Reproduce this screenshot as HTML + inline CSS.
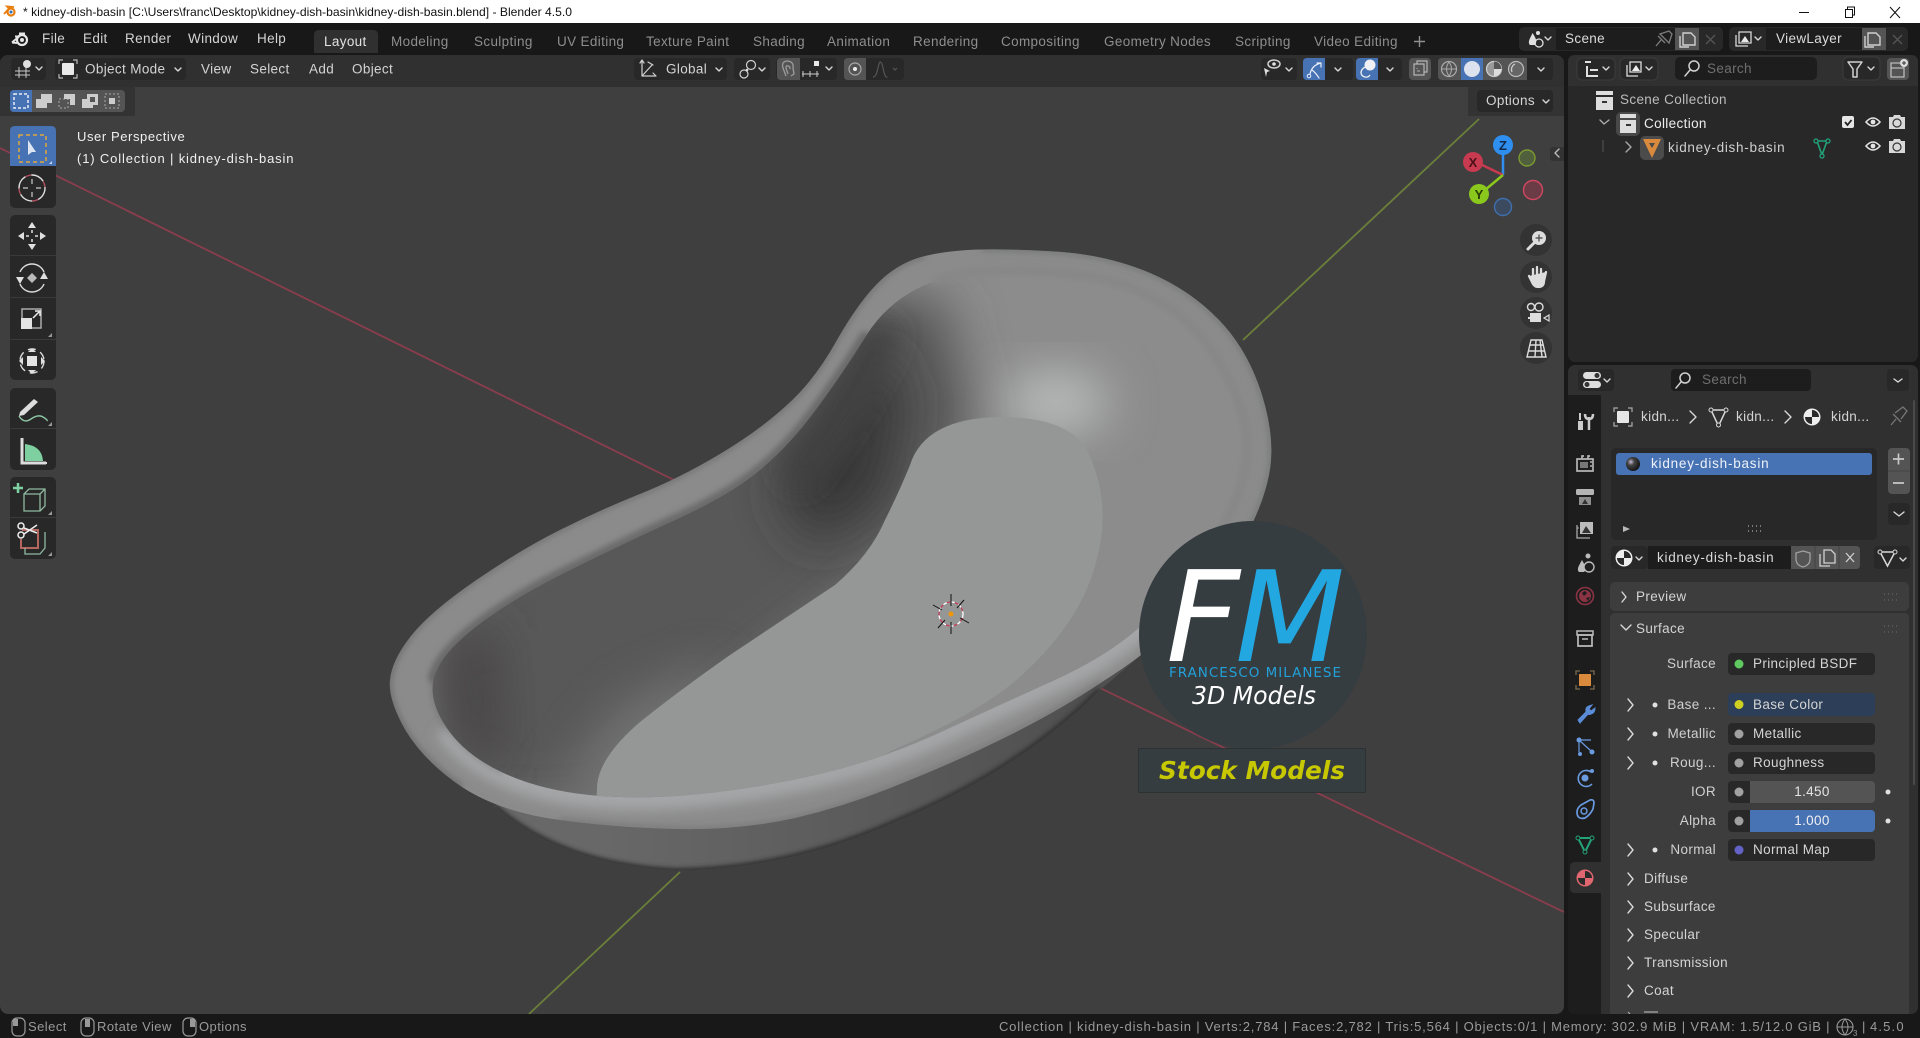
<!DOCTYPE html>
<html><head><meta charset="utf-8"><title>Blender</title>
<style>
html,body{margin:0;padding:0;background:#181818;width:1920px;height:1038px;overflow:hidden}
svg{display:block}
text{font-family:"Liberation Sans",sans-serif;font-size:13.5px;letter-spacing:.35px;fill:#d4d4d4;white-space:pre}
.tab{fill:#8e8e8e}.dim{fill:#6f6f6f}.lab{text-anchor:end;fill:#d0d0d0}.sb{fill:#9a9a9a;font-size:13px;letter-spacing:.45px}
.ic{fill:none;stroke:#d0d0d0;stroke-width:1.5;stroke-linecap:round;stroke-linejoin:round}
.chev{fill:none;stroke:#d8d8d8;stroke-width:1.4;stroke-linecap:round;stroke-linejoin:round}
.logo{font-family:"DejaVu Sans",sans-serif;font-style:oblique;letter-spacing:0}
</style></head><body>
<svg xmlns="http://www.w3.org/2000/svg" width="1920" height="1038" viewBox="0 0 1920 1038">
<defs>
<clipPath id="inner"><path d="M995 271Q1040 270 1080 275Q1120 280 1155 299Q1190 318 1212.500 351.500Q1235 385 1243.500 417.500Q1252 450 1241 485Q1230 520 1205 555Q1180 590 1145 622.500Q1110 655 1055 680Q1000 705 940 732.500Q880 760 820 774Q760 788 700 794Q640 800 590 795Q540 790 502.500 772.500Q465 755 446.500 727.500Q428 700 434 677.500Q440 655 475 627.500Q510 600 565 572.500Q620 545 675 520Q730 495 760 470Q790 445 817.500 407.500Q845 370 865 337.500Q885 305 917.500 288.500Q950 272 995 271Z"/></clipPath>
<clipPath id="outer"><path d="M982 249.500Q1015 249 1062 252Q1110 256 1150 273Q1190 290 1219 320Q1248 350 1262 395Q1276 440 1269 475Q1262 510 1238 550Q1215 590 1180 622Q1145 655 1102 682Q1060 710 1010 735Q960 760 905 782Q850 805 795 818Q740 830 680 829Q620 828 560 820Q500 812 462 787Q425 762 406 731Q388 700 390 680Q392 660 411 636Q430 612 475 581Q520 550 560 530Q600 510 640 494Q680 478 720 454Q760 430 787 405Q815 380 837 340Q860 300 880 281Q900 262 925 256Q950 250 982 249.500Z"/></clipPath>
<clipPath id="bodyc"><path d="M494 806Q560 865 675 871Q790 870 900 820Q1020 770 1100 690L1180 622L900 700Z"/></clipPath>
<clipPath id="vp"><rect x="0" y="55" width="1564" height="959" rx="8"/></clipPath>
<filter id="b2" x="-20%" y="-20%" width="140%" height="140%"><feGaussianBlur stdDeviation="2"/></filter>
<filter id="b3" x="-20%" y="-20%" width="140%" height="140%"><feGaussianBlur stdDeviation="3"/></filter>
<filter id="b6" x="-30%" y="-30%" width="160%" height="160%"><feGaussianBlur stdDeviation="6"/></filter>
<filter id="b14" x="-40%" y="-40%" width="180%" height="180%"><feGaussianBlur stdDeviation="14"/></filter>
<filter id="b24" x="-50%" y="-50%" width="200%" height="200%"><feGaussianBlur stdDeviation="24"/></filter>
<linearGradient id="body" gradientUnits="userSpaceOnUse" x1="600" y1="0" x2="1080" y2="0"><stop offset="0" stop-color="#686868"/><stop offset="1" stop-color="#505050"/></linearGradient>
<radialGradient id="mat" cx=".35" cy=".35" r=".7"><stop offset="0" stop-color="#c8b8d8"/><stop offset=".35" stop-color="#444"/><stop offset="1" stop-color="#111"/></radialGradient>
</defs>

<!-- backgrounds -->
<rect width="1920" height="1038" fill="#181818"/>
<rect width="1920" height="23" fill="#fff"/>

<!-- title bar -->
<g transform="translate(11,12)"><circle r="3.500" fill="none" stroke="#e87d0d" stroke-width="2.200"/><circle r="1.500" fill="#2a70b8"/><path d="M-7 2L-2 -3.500L-4 -5.500L3 -5" fill="none" stroke="#e87d0d" stroke-width="1.800"/></g>
<text x="23" y="16" textLength="549" lengthAdjust="spacingAndGlyphs" style="font-size:12px;letter-spacing:0;fill:#111">* kidney-dish-basin [C:\Users\franc\Desktop\kidney-dish-basin\kidney-dish-basin.blend] - Blender 4.5.0</text>
<path d="M1799 12.500h10" stroke="#111" stroke-width="1"/>
<path d="M1845.500 9.500h7v8h-7zM1847.500 9.500v-2.500h7v8h-2" fill="none" stroke="#111" stroke-width="1"/>
<path d="M1890 7l10 11M1900 7l-10 11" stroke="#111" stroke-width="1"/>

<!-- top bar -->
<g transform="translate(20,39)"><circle cx="2" cy="1" r="5" fill="none" stroke="#e6e6e6" stroke-width="2.200"/><circle cx="2" cy="1" r="2" fill="#e6e6e6"/><path d="M-8 3.500L-1 -2.500L-5 -2.500M-1 -5.500L5 -5.500M-8 3.500L-3 4" fill="none" stroke="#e6e6e6" stroke-width="2"/></g>
<g><text x="42" y="43">File</text><text x="83" y="43">Edit</text><text x="125" y="43">Render</text><text x="188" y="43">Window</text><text x="257" y="43">Help</text></g>
<path d="M314 53V35q0-5 5-5h54q5 0 5 5v18z" fill="#303030"/>
<text x="324" y="46" style="fill:#e2e2e2">Layout</text>
<g class="tabs">
<text class="tab" x="391" y="46">Modeling</text><text class="tab" x="474" y="46">Sculpting</text><text class="tab" x="557" y="46">UV Editing</text><text class="tab" x="646" y="46">Texture Paint</text><text class="tab" x="753" y="46">Shading</text><text class="tab" x="827" y="46">Animation</text><text class="tab" x="913" y="46">Rendering</text><text class="tab" x="1001" y="46">Compositing</text><text class="tab" x="1104" y="46">Geometry Nodes</text><text class="tab" x="1235" y="46">Scripting</text><text class="tab" x="1314" y="46">Video Editing</text></g>
<path d="M1414 41.500h11M1419.500 36v11" stroke="#8e8e8e" stroke-width="1.400"/>

<!-- scene selector -->
<rect x="1519" y="27" width="204" height="24" rx="5" fill="#282828"/>
<rect x="1556" y="28" width="126" height="22" fill="#1d1d1d"/>
<rect x="1675" y="28" width="24" height="22" fill="#545454"/>
<g transform="translate(1536,39)"><path d="M-6 6C-9 3 -5 -2 -3.500 -6C-1 -2 2 2 -1 6z" fill="#e0e0e0"/><circle cx="2" cy="-6" r="2" fill="#e0e0e0"/><circle cx="3" cy="4" r="4" fill="none" stroke="#e0e0e0" stroke-width="1.300"/></g>
<path class="chev" d="M1545 37l3 3l3-3"/>
<text x="1565" y="43" style="fill:#dcdcdc">Scene</text>
<path d="M1656 46l5-6M1658 36l7 7M1660 34l9-3l3 3l-3 9z" fill="none" stroke="#7c7c7c" stroke-width="1.300"/>
<path d="M1683 33h8l4 4v8h-12zM1680 36v11h9" fill="none" stroke="#d0d0d0" stroke-width="1.400"/>
<path d="M1706 35l9 9M1715 35l-9 9" stroke="#555" stroke-width="1.300"/>
<rect x="1729" y="27" width="179" height="24" rx="5" fill="#282828"/>
<rect x="1766" y="28" width="102" height="22" fill="#1d1d1d"/>
<rect x="1862" y="28" width="24" height="22" fill="#545454"/>
<path d="M1739 32h12v11h-12zM1736 35v11h12" fill="none" stroke="#d8d8d8" stroke-width="1.300"/><path d="M1741 42l4-6l4 6z" fill="#e8e8e8"/>
<path class="chev" d="M1755 37l3 3l3-3"/>
<text x="1776" y="43" style="fill:#dcdcdc">ViewLayer</text>
<path d="M1868 33h8l4 4v8h-12zM1865 36v11h9" fill="none" stroke="#d0d0d0" stroke-width="1.400"/>
<path d="M1893 35l9 9M1902 35l-9 9" stroke="#555" stroke-width="1.300"/>

<!-- VIEWPORT -->
<rect x="0" y="55" width="1564" height="959" rx="8" fill="#3f3f3f"/>
<g clip-path="url(#vp)">
<path d="M0 148L676 481M1100 688L1564 912" stroke="#8a3d4d" stroke-width="1.800" fill="none"/>
<path d="M1243 340L1479 119M680 872L529 1014" stroke="#6b7f3a" stroke-width="1.800" fill="none"/>

<!-- bowl body -->
<path d="M494 806Q560 865 675 871Q790 870 900 820Q1020 770 1100 690L1180 622L900 700Z" fill="url(#body)"/>
<g clip-path="url(#bodyc)">
<path d="M494 806Q560 865 675 871Q790 870 900 820Q1020 770 1100 690" fill="none" stroke="#333030" stroke-width="6" filter="url(#b2)"/>
</g>

<!-- rim -->
<g clip-path="url(#outer)">
<rect x="380" y="240" width="900" height="600" fill="#8b8b8b"/>
<path d="M1205 555Q1180 590 1145 622.500Q1110 655 1055 680Q1000 705 940 732.500Q880 760 820 774Q760 788 700 794Q640 800 590 795Q540 790 502.500 772.500Q465 755 446.500 727.500" fill="none" stroke="#a5a6a7" stroke-width="26" filter="url(#b6)"/>
<path d="M434 677Q440 655 475 627.500Q510 600 565 572.500Q620 545 675 520Q730 495 760 470Q790 445 817.500 407.500Q845 370 865 337.500" fill="none" stroke="#6a6a6a" stroke-width="12" stroke-linecap="round" filter="url(#b3)"/>
<path d="M982 249.500Q1015 249 1062 252Q1110 256 1150 273Q1190 290 1219 320Q1248 350 1262 395Q1276 440 1269 475Q1262 510 1238 550" fill="none" stroke="#777878" stroke-width="5" filter="url(#b3)"/>
<path d="M925 256Q900 262 880 281Q860 300 837 340Q815 380 787 405Q760 430 720 454Q680 478 640 494Q600 510 560 530Q520 550 475 581Q430 612 411 636" fill="none" stroke="#737373" stroke-width="5" filter="url(#b3)"/>
<path d="M462 787Q425 762 406 731Q388 700 390 680Q392 660 411 636" fill="none" stroke="#6e6e6e" stroke-width="5" filter="url(#b3)"/>
<path d="M560 820Q620 828 680 829Q740 830 795 818Q850 805 905 782Q960 760 1010 735Q1060 710 1102 682" fill="none" stroke="#7a7a7a" stroke-width="5" filter="url(#b3)"/>
</g>

<!-- interior -->
<g clip-path="url(#inner)">
<rect x="420" y="260" width="840" height="550" fill="#8c8c8c"/>
<path d="M870 290L945 300L975 420L900 560L720 700L600 810L420 810L420 600Z" fill="#595959" filter="url(#b24)"/>
<path d="M775 490L835 420L880 345L905 400L885 500L815 545Z" fill="#383737" filter="url(#b24)"/>
<path d="M790 480Q840 420 885 325" fill="none" stroke="#403f3f" stroke-width="34" filter="url(#b14)"/>
<path d="M440 650L495 625L505 770L460 750Z" fill="#474545" filter="url(#b24)"/>
<path d="M545 800L620 705L720 660L680 800Z" fill="#7a7a7a" opacity=".75" filter="url(#b24)"/>
<ellipse cx="1056" cy="402" rx="52" ry="30" fill="#bcbdbd" filter="url(#b24)"/>
<path d="M1000 417Q1075 417 1090 457Q1105 490 1102 530Q1098 570 1079 605Q1060 640 1022 675Q985 710 893 750L800 800L596 805L597 790Q596 760 640 722Q680 690 730 655Q790 615 835 585Q870 555 885 520Q900 490 910 465Q925 418 1000 417Z" fill="#959696"/>
</g>
<!-- soft upper lip blend -->
<path d="M935 280Q965 271 995 271Q1040 270 1080 275Q1120 280 1155 299Q1190 318 1212.500 351.500Q1235 385 1243.500 417.500Q1252 450 1241 485Q1230 520 1205 555" fill="none" stroke="#878787" stroke-width="9" stroke-linecap="round" filter="url(#b3)"/>
<path d="M434 677.500Q428 700 446.500 727.500Q465 755 502.500 772.500" fill="none" stroke="#555" stroke-width="2" filter="url(#b3)" opacity=".6"/>

<!-- 3D cursor -->
<g transform="translate(951,614)">
<circle r="12" fill="none" stroke="#fff" stroke-width="1.300" stroke-dasharray="4 4"/>
<circle r="12" fill="none" stroke="#c0405a" stroke-width="1.300" stroke-dasharray="4 4" stroke-dashoffset="4"/>
<path d="M0 -20V-8M0 8V20M-18 -9L-9 -4M9 4L18 9M-13 14L-6 6M6 -6L13 -14" stroke="#111" stroke-width="1"/>
<circle r="2.500" fill="#f0960a"/>
</g>

<!-- watermark logo -->
<circle cx="1253" cy="635" r="114" fill="#353d41"/>
<rect x="1240" y="740" width="26" height="12" fill="#353d41"/>
<rect x="1138.500" y="748.500" width="227" height="44" fill="#353d41" stroke="#2a2f32" stroke-width=".8"/>
<text class="logo" x="1166" y="661" textLength="74" lengthAdjust="spacingAndGlyphs" style="font-size:126px;fill:#fff">F</text>
<text class="logo" x="1235" y="661" textLength="110" lengthAdjust="spacingAndGlyphs" style="font-size:126px;fill:#23a7e0">M</text>
<text x="1169" y="677" textLength="172" style="font-family:'DejaVu Sans',sans-serif;font-size:13.500px;letter-spacing:0;fill:#23a0d8">FRANCESCO MILANESE</text>
<text class="logo" x="1192" y="704" textLength="124" lengthAdjust="spacingAndGlyphs" style="font-size:24.500px;fill:#fff">3D Models</text>
<text class="logo" x="1159" y="779" textLength="186" lengthAdjust="spacingAndGlyphs" style="font-size:25px;font-weight:bold;fill:#c8c800">Stock Models</text>

<!-- header strip -->
<rect x="0" y="55" width="1564" height="32" fill="#303030"/>
<rect x="0" y="87" width="135" height="29" fill="#333"/>
<rect x="1468" y="87" width="96" height="29" fill="#333"/>
</g>

<!-- viewport header controls -->
<g>
<rect x="11" y="58" width="35" height="22" rx="4" fill="#282828"/>
<path d="M15 71h15M15 75h15M19 67v11M26 67v11" stroke="#c8c8c8" stroke-width="1" fill="none"/><circle cx="27" cy="64" r="4" fill="#e0e0e0"/>
<path class="chev" d="M36 67l3 3l3-3"/>
<rect x="55" y="58" width="131" height="22" rx="4" fill="#282828"/>
<rect x="62" y="63" width="12" height="12" rx="1" fill="#e8e8e8"/><path d="M59 64v-4h4M73 60h4v4M77 74v4h-4M63 78h-4v-4" fill="none" stroke="#b8b8b8" stroke-width="1.200"/>
<text x="85" y="73.500">Object Mode</text><path class="chev" d="M175 68l3 3l3-3"/>
<text x="201" y="73.500">View</text><text x="250" y="73.500">Select</text><text x="309" y="73.500">Add</text><text x="352" y="73.500">Object</text>

<rect x="634" y="58" width="93" height="22" rx="4" fill="#282828"/>
<path d="M642 62v14h14M642 76l10-11M648 62l5 3M656 76l-3-3M642 60l-2 3M642 60l2 3" class="ic" style="stroke-width:1.200"/>
<text x="666" y="73.500">Global</text><path class="chev" d="M716 68l3 3l3-3"/>
<rect x="734" y="58" width="36" height="22" rx="4" fill="#282828"/>
<circle cx="744" cy="74" r="4" class="ic" style="stroke-width:1.200"/><circle cx="751" cy="65" r="4.500" class="ic" style="stroke-width:1.200"/><circle cx="747" cy="70" r="1.300" fill="#e0e0e0"/>
<path class="chev" d="M759 68l3 3l3-3"/>
<rect x="776" y="58" width="61" height="22" rx="4" fill="#282828"/>
<path d="M777 62q0-4 4-4h19v22h-19q-4 0-4-4z" fill="#545454"/>
<path d="M786 76l-3-8q-2-7 5-7q6 1 5 7l1 6l-3 2M788 74l-2-6q0-3 2-2q2 0 2 3" fill="none" stroke="#9c9c9c" stroke-width="1.300"/>
<path d="M802 74h17M803 71v6M810 71v6M817 71v6" stroke="#ccc" stroke-width="1" fill="none"/><rect x="814" y="61" width="5" height="5" fill="#e8e8e8"/>
<path class="chev" d="M826 67l3 3l3-3"/>
<rect x="844" y="58" width="60" height="22" rx="4" fill="#282828"/>
<path d="M844 62q0-4 4-4h18v22h-18q-4 0-4-4z" fill="#545454"/>
<circle cx="855" cy="69" r="6" fill="none" stroke="#aaa" stroke-width="1.200"/><circle cx="855" cy="69" r="2" fill="#eee"/>
<path d="M873 77q3 0 4.500-7t2.500-8q2 0 3.500 8t4 7" fill="none" stroke="#555" stroke-width="1.200"/>
<path d="M893 68l2 2l2-2" fill="none" stroke="#555" stroke-width="1.200"/>

<!-- right side -->
<rect x="1261" y="58" width="36" height="22" rx="4" fill="#282828"/>
<ellipse cx="1274" cy="64" rx="6" ry="4" class="ic"/><circle cx="1274" cy="64" r="1.800" fill="#e0e0e0"/>
<path d="M1264 68l6 3l-3 1l-1 5z" fill="#e0e0e0"/><path class="chev" d="M1286 68l3 3l3-3"/>
<rect x="1303" y="58" width="50" height="22" rx="4" fill="#282828"/>
<path d="M1303 62q0-4 4-4h18v22h-18q-4 0-4-4z" fill="#4772b3"/>
<path d="M1310 74q2-9 11-11M1321 63l-4 0M1321 63l0 4M1312 70q4 3 7 8" class="ic" style="stroke:#e8eef8;stroke-width:1.200"/><circle cx="1309" cy="76" r="1.800" fill="none" stroke="#e8eef8"/>
<path class="chev" d="M1335 68l3 3l3-3"/>
<rect x="1356" y="58" width="46" height="22" rx="4" fill="#282828"/>
<path d="M1356 62q0-4 4-4h18v22h-18q-4 0-4-4z" fill="#4772b3"/>
<circle cx="1370" cy="65" r="5.500" fill="#eef0f5"/><path d="M1361 73a6 6 0 0 1 5-6M1361 73a5 5 0 0 0 9 2" fill="none" stroke="#eef0f5" stroke-width="1.300"/>
<path class="chev" d="M1387 68l3 3l3-3"/>
<rect x="1409" y="58" width="22" height="22" rx="4" fill="#545454"/>
<path d="M1414 64h10v11h-10zM1417 64v-3h10v11h-3" fill="none" stroke="#b5b5b5" stroke-width="1.200"/><path d="M1417 68v1M1417 71h3" stroke="#b5b5b5"/>
<rect x="1438" y="58" width="115" height="22" rx="4" fill="#282828"/>
<path d="M1438 62q0-4 4-4h85v22h-85q-4 0-4-4z" fill="#545454"/>
<rect x="1461" y="58" width="22" height="22" fill="#4772b3"/>
<circle cx="1449" cy="69" r="7.500" fill="none" stroke="#aaa" stroke-width="1.200"/><path d="M1442 69h14M1449 62q-5 7 0 14M1449 62q5 7 0 14" fill="none" stroke="#aaa" stroke-width="1"/>
<circle cx="1472" cy="69" r="8" fill="#dde3ee"/>
<circle cx="1494" cy="69" r="7.500" fill="#999" stroke="#cfcfcf" stroke-width="1.200"/><path d="M1494 61.500a7.500 7.500 0 0 1 0 15z" fill="#555"/><path d="M1494 69h7.500a7.500 7.500 0 0 1 -7.500 7.500z" fill="#ddd"/>
<circle cx="1516" cy="69" r="7.500" fill="#666" stroke="#bbb" stroke-width="1.200"/><path d="M1512 72a6 6 0 0 1 3-8" fill="none" stroke="#ccc" stroke-width="1.200"/>
<path class="chev" d="M1538 68l3 3l3-3"/>

<rect x="1477" y="90" width="76" height="22" rx="4" fill="#282828"/>
<text x="1486" y="105">Options</text><path class="chev" d="M1543 100l3 3l3-3"/>

<!-- tool settings -->
<g transform="translate(10,90)">
<rect width="115" height="22" rx="4" fill="#545454"/>
<path d="M0 4q0-4 4-4h18v22h-18q-4 0-4-4z" fill="#4772b3"/>
<rect x="4" y="4" width="14" height="14" fill="none" stroke="#e8eef8" stroke-width="1.500" stroke-dasharray="3 2"/>
<path d="M26 18v-9h5v-5h11v9h-5v5z" fill="#ccc"/>
<rect x="49" y="9" width="9" height="9" fill="none" stroke="#aaa" stroke-dasharray="2 2"/><path d="M54 9v-5h11v11h-5v-6z" fill="#ccc"/>
<path d="M72 18v-9h5v-5h11v11h-5v3z" fill="#ccc"/><rect x="80" y="7" width="5" height="5" fill="#555"/>
<rect x="95" y="4" width="14" height="14" fill="none" stroke="#aaa" stroke-dasharray="2 2"/><rect x="99" y="8" width="6" height="6" fill="#ccc"/>
</g>
</g>

<!-- overlay text -->
<text x="77" y="141" textLength="108" style="font-size:13px;fill:#f0f0f0;letter-spacing:.3px">User Perspective</text>
<text x="77" y="163" textLength="217" style="font-size:13px;fill:#f0f0f0;letter-spacing:.5px">(1) Collection | kidney-dish-basin</text>

<!-- toolbar -->
<rect x="10" y="126" width="46" height="82" rx="5" fill="#282828"/>
<path d="M10 131q0-5 5-5h36q5 0 5 5v35h-46z" fill="#4772b3"/>
<rect x="19" y="135" width="27" height="27" fill="none" stroke="#e0a83c" stroke-width="1.500" stroke-dasharray="4 3"/>
<path d="M28 140v15l4-3l4 0z" fill="#dde5f2"/>
<path d="M52 161l-3 3h3z" fill="#c8d4e8"/>
<circle cx="32" cy="188" r="13" fill="none" stroke="#ddd" stroke-width="1.400" stroke-dasharray="14 6"/>
<circle cx="32" cy="188" r="13" fill="none" stroke="#b05060" stroke-width="1.400" stroke-dasharray="6 14" stroke-dashoffset="-14"/>
<path d="M32 179v5M32 192v5M23 188h5M36 188h5" stroke="#ccc" stroke-width="1.200"/>

<rect x="10" y="215" width="46" height="165" rx="5" fill="#282828"/>
<path d="M10 255.500h46M10 297.500h46M10 339.500h46" stroke="#3a3a3a"/>
<g fill="#e0e0e0"><path d="M32 222l4 6h-8zM32 250l4-6h-8zM18 236l6-4v8zM46 236l-6-4v8z"/><path d="M32 230v3M32 239v3M26 236h3M35 236h3" stroke="#e0e0e0" stroke-width="1.500"/></g>
<path d="M20 272a13 13 0 0 1 24 0M44 284a13 13 0 0 1 -24 0" fill="none" stroke="#ddd" stroke-width="1.400"/>
<path d="M44 272l4 7h-8zM20 284l-4-7h8z" fill="#e0e0e0"/><path d="M32 273l5 5l-5 5l-5-5z" fill="#bbb"/>
<rect x="22" y="309" width="19" height="19" fill="none" stroke="#aaa" stroke-width="1.500"/>
<rect x="21" y="318" width="11" height="11" fill="#e4e4e4"/>
<path d="M33 318l6-6M35 311h5v5" fill="none" stroke="#eee" stroke-width="1.500"/>
<path d="M52 333l-4 4h4z" fill="#999"/>
<circle cx="32" cy="361" r="12" fill="none" stroke="#ddd" stroke-width="1.400" stroke-dasharray="8 5"/>
<rect x="27" y="356" width="10" height="10" fill="#e4e4e4"/>
<path d="M32 348l4 4h-8zM32 374l4-4h-8zM19 361l4-4v8zM45 361l-4-4v8z" fill="#e0e0e0"/>

<rect x="10" y="388" width="46" height="82" rx="5" fill="#282828"/>
<path d="M10 428.500h46" stroke="#3a3a3a"/>
<g transform="translate(0,-4)"><path d="M20 416l14-13l4 3l-14 13l-5 1z" fill="#ddd"/>
<path d="M19 420q5 8 12 3t12-2t4 4" fill="none" stroke="#8ec9a5" stroke-width="1.400"/></g>
<path d="M52 422l-4 4h4z" fill="#999"/>
<path d="M22 438v25h24" fill="none" stroke="#ddd" stroke-width="3"/>
<path d="M25 444q17 2 18 17h-18z" fill="#7ed0a0"/>
<path d="M22 463h25" stroke="#ddd" stroke-width="2" stroke-dasharray="2 1"/>

<rect x="10" y="477" width="46" height="82" rx="5" fill="#282828"/>
<path d="M10 517.500h46" stroke="#3a3a3a"/>
<path d="M18 483v10M13 488h10" stroke="#7ed0a0" stroke-width="2.500"/>
<path d="M24 494h16v17h-16zM24 494l5-5h16v17l-5 5M40 494l5-5" fill="none" stroke="#8fb8a0" stroke-width="1.300"/>
<path d="M52 511l-4 4h4z" fill="#999"/>
<path d="M22 530h16v18h-17v-9" fill="none" stroke="#b5665f" stroke-width="2"/>
<path d="M25 548v6h15l5-6v-16" fill="none" stroke="#8fb8a0" stroke-width="1.300"/>
<circle cx="21" cy="526" r="3" fill="none" stroke="#eee" stroke-width="1.500"/><circle cx="21" cy="535" r="3" fill="none" stroke="#eee" stroke-width="1.500"/>
<path d="M24 528l13 5M24 534l13-9" stroke="#eee" stroke-width="1.500"/>
<path d="M52 552l-4 4h4z" fill="#999"/>

<!-- gizmo -->
<path d="M1503 175V150" stroke="#2e8ff0" stroke-width="2.500"/>
<path d="M1503 175L1478 163" stroke="#c83a50" stroke-width="2.500"/>
<path d="M1503 175L1485 190" stroke="#8bc81e" stroke-width="2.500"/>
<circle cx="1527" cy="158" r="8" fill="#50603c" stroke="#7c9a30" stroke-width="1.400"/>
<circle cx="1533" cy="190" r="9.500" fill="#6b3b46" stroke="#d04860" stroke-width="1.400"/>
<circle cx="1503" cy="207" r="8.500" fill="#3c4a60" stroke="#3f6fae" stroke-width="1.400"/>
<circle cx="1503" cy="145" r="10" fill="#2e8ff0"/><text x="1503" y="150" text-anchor="middle" style="font-size:13px;font-weight:bold;fill:#12294a;letter-spacing:0">Z</text>
<circle cx="1473" cy="162" r="10" fill="#c83a50"/><text x="1473" y="167" text-anchor="middle" style="font-size:13px;font-weight:bold;fill:#4a1018;letter-spacing:0">X</text>
<circle cx="1479" cy="194" r="10" fill="#8bc81e"/><text x="1479" y="199" text-anchor="middle" style="font-size:13px;font-weight:bold;fill:#2a3c08;letter-spacing:0">Y</text>
<g fill="#333"><circle cx="1536" cy="240" r="16"/><circle cx="1536" cy="277" r="16"/><circle cx="1536" cy="313" r="16"/><circle cx="1536" cy="348" r="16"/></g>
<circle cx="1539" cy="238" r="7" fill="#ddd"/><path d="M1528 249l6-6" stroke="#ddd" stroke-width="3" stroke-linecap="round"/><path d="M1535.500 238h7M1539 234.500v7" stroke="#444" stroke-width="1.200"/>
<path d="M1529 276l4 8q2 3 5 3q6 0 6-6l2-9M1533 279v-10M1537 279v-12M1541 279v-10" fill="#ddd" stroke="#ddd" stroke-width="2.300" stroke-linecap="round"/>
<circle cx="1531" cy="307" r="3.500" fill="none" stroke="#ddd" stroke-width="1.400"/><circle cx="1539" cy="307" r="4" fill="none" stroke="#ddd" stroke-width="1.400"/><rect x="1530" y="313" width="11" height="9" fill="#ddd"/><path d="M1544 318l5-3v6z" fill="none" stroke="#ddd" stroke-width="1.200"/><path d="M1528 318h2" stroke="#ddd" stroke-width="2"/>
<path d="M1531 340h11l4 17h-19zM1536 340l-1 17M1540 340l2 17M1530 345h13M1528 351h17" fill="none" stroke="#ddd" stroke-width="1.400"/>
<path d="M1555 147l-2 0q-3 0-3 3v8q0 3 3 3h11v-14z" fill="#333"/><path d="M1559 149l-4 4l4 4" class="chev" style="stroke:#bbb"/>

<!-- OUTLINER -->
<rect x="1568" y="55" width="350" height="307" rx="7" fill="#282828"/>
<path d="M1568 86V62q0-7 7-7h336q7 0 7 7v24z" fill="#303030"/>
<rect x="1577" y="58" width="38" height="22" rx="5" fill="#282828" stroke="#3c3c3c"/>
<path d="M1585 62h6M1587 66v10h3M1590 70h8M1590 76h8" stroke="#e0e0e0" stroke-width="2" fill="none"/><path class="chev" d="M1603 67l3 3l3-3"/>
<rect x="1620" y="58" width="38" height="22" rx="5" fill="#282828" stroke="#3c3c3c"/>
<path d="M1630 62h11v10h-11zM1627 65v11h11" fill="none" stroke="#ddd" stroke-width="1.300"/><path d="M1632 71l4-6l4 6z" fill="#eee"/><path class="chev" d="M1646 67l3 3l3-3"/>
<rect x="1675" y="57" width="142" height="23" rx="5" fill="#1d1d1d"/>
<circle cx="1694" cy="66" r="5" class="ic"/><path d="M1690 70l-5 6" class="ic"/>
<text x="1707" y="73" class="dim">Search</text>
<rect x="1843" y="57" width="37" height="23" rx="5" fill="#282828" stroke="#3c3c3c"/>
<path d="M1848 62h14l-5 7v8h-4v-8z" class="ic"/><path class="chev" d="M1868 67l3 3l3-3"/>
<rect x="1887" y="58" width="22" height="22" rx="4" fill="#545454"/>
<path d="M1891 63h13v14h-13zM1891 68h13" fill="none" stroke="#bbb" stroke-width="1.300"/><circle cx="1904" cy="63" r="4" fill="#ddd"/><path d="M1902 63h4M1904 61v4" stroke="#333"/>

<path d="M1596 91h17v4h-17z" fill="#ddd"/><rect x="1596" y="97" width="17" height="13" fill="#ddd"/><rect x="1602" y="101" width="5" height="2" fill="#333"/>
<text x="1620" y="104" style="fill:#bcbcbc">Scene Collection</text>
<path class="chev" d="M1600 120l4 4l5-4" style="stroke:#aaa"/>
<rect x="1616" y="112" width="24" height="24" rx="5" fill="#484848"/>
<path d="M1620 114h16v4h-16z" fill="#ddd"/><rect x="1620" y="120" width="16" height="13" fill="#ddd"/><rect x="1626" y="124" width="5" height="2" fill="#333"/>
<text x="1644" y="128" style="fill:#ededed">Collection</text>
<rect x="1842" y="116" width="12" height="12" rx="2" fill="#e6e6e6"/><path d="M1845 122l2.500 3l4-5" fill="none" stroke="#222" stroke-width="1.800"/>
<path d="M1866 122q7-8 14 0q-7 8-14 0z" fill="none" stroke="#e4e4e4" stroke-width="1.600"/><circle cx="1873" cy="122" r="2.400" fill="#e4e4e4"/>
<path d="M1889 117h4l1-2h6l1 2h4v12h-16z" fill="#d8d8d8"/><circle cx="1897" cy="123" r="4" fill="#d8d8d8" stroke="#333" stroke-width="1.200"/>

<path d="M1603 140v12" stroke="#555"/>
<path class="chev" d="M1626 142l5 5l-5 5" style="stroke:#aaa"/>
<rect x="1640" y="136" width="24" height="24" rx="5" fill="#4b4b4b"/>
<path d="M1643 139h18l-9 19z" fill="#d98a3c"/><path d="M1649 143h6l-3 5z" fill="#4b4b4b"/>
<text x="1668" y="152" textLength="117" style="fill:#d0d0d0">kidney-dish-basin</text>
<path d="M1817 141h10l-5 14z" fill="none" stroke="#22a37a" stroke-width="1.600"/>
<circle cx="1816" cy="141" r="2" fill="#282828" stroke="#22a37a" stroke-width="1.300"/><circle cx="1828" cy="141" r="2" fill="#282828" stroke="#22a37a" stroke-width="1.300"/><circle cx="1822" cy="156" r="2" fill="#282828" stroke="#22a37a" stroke-width="1.300"/>
<path d="M1866 146q7-8 14 0q-7 8-14 0z" fill="none" stroke="#e4e4e4" stroke-width="1.600"/><circle cx="1873" cy="146" r="2.400" fill="#e4e4e4"/>
<path d="M1889 141h4l1-2h6l1 2h4v12h-16z" fill="#d8d8d8"/><circle cx="1897" cy="147" r="4" fill="#d8d8d8" stroke="#333" stroke-width="1.200"/>

<!-- PROPERTIES -->
<rect x="1568" y="365" width="350" height="649" rx="7" fill="#303030"/>
<path d="M1568 1007V395h33v619h-26q-7 0-7-7z" fill="#1d1d1d"/>
<rect x="1578" y="369" width="36" height="22" rx="4" fill="#282828"/>
<rect x="1583" y="372" width="18" height="7" rx="3.500" fill="#ddd"/><rect x="1583" y="381" width="18" height="7" rx="3.500" fill="#ddd"/><circle cx="1597" cy="375.500" r="2.500" fill="#333"/><circle cx="1587" cy="384.500" r="2.500" fill="#333"/>
<path class="chev" d="M1604 379l3 3l3-3"/>
<rect x="1671" y="369" width="140" height="22" rx="4" fill="#1d1d1d"/>
<circle cx="1685" cy="378" r="5" class="ic"/><path d="M1681 382l-5 6" class="ic"/>
<text x="1702" y="384" class="dim">Search</text>
<rect x="1887" y="369" width="22" height="22" rx="4" fill="#282828"/><path class="chev" d="M1894 379l4 3l4-3"/>

<!-- nav tabs icons -->
<g transform="translate(1585,0)">
<path d="M-5 413v7" stroke="#ccc" stroke-width="2"/><path d="M-7 421h5v9h-5z" fill="#ccc"/><path d="M4 430v-13M0 414q0 5 4 5q4 0 4-5" fill="none" stroke="#ccc" stroke-width="2.500"/>
<path d="M-8 459h16v12h-16zM-3 459v-3h2M3 459v-3h2" fill="none" stroke="#b5b5b5" stroke-width="1.700"/><path d="M-5 462h8v6h-8z" fill="#777"/><path d="M6 461v8" stroke="#b5b5b5" stroke-dasharray="2 2" stroke-width="1.500"/>
<rect x="-9" y="489" width="18" height="6" rx="1.500" fill="#b5b5b5"/><path d="M-6 497h12v8h-12z" fill="#8d8d8d"/><path d="M-3 504l3-5l3 5z" fill="#333"/>
<path d="M-5 522h13v12h-13z" fill="#bbb"/><path d="M-3 533l4-7l5 7z" fill="#333"/><path d="M-8 525v13h13" fill="none" stroke="#aaa" stroke-width="1.300"/><path d="M-8 528h2" stroke="#aaa"/>
<path d="M-6 572c-3-3 1-8 3-12c2 4 6 9 2 12z" fill="#bbb"/><circle cx="3" cy="556" r="2.500" fill="#bbb"/><circle cx="4" cy="567" r="5" fill="#1d1d1d" stroke="#bbb" stroke-width="1.400"/>
<circle cy="596" r="8.500" fill="none" stroke="#8a3344" stroke-width="1.600"/><circle cy="596" r="6" fill="#8a3344"/><path d="M-3 593l3-2l2 2l-3 3zM1 598l4-1l-2 4z" fill="#1d1d1d"/>
<path d="M-8 631h16v4h-16z" fill="none" stroke="#bbb" stroke-width="1.500"/><path d="M-7 635h14v11h-14z" fill="none" stroke="#bbb" stroke-width="1.700"/><path d="M-3 639h6" stroke="#bbb" stroke-width="1.500"/>
<rect x="-6" y="674" width="12" height="12" fill="#d98a3c"/><path d="M-9 675v-4h4M5 671h4v4M9 685v4h-4M-5 689h-4v-4" fill="none" stroke="#7a6a50" stroke-width="1.300"/>
<path d="M-7 720l8-8q-1-5 3-6l3-1l-3 4l2 2l4-3q0 5-4 6q-2 1-3 0l-8 9z" fill="#5b8cd8" stroke="#5b8cd8"/>
<circle cx="-6" cy="740" r="2.500" fill="#6a9ae0"/><circle cx="-5" cy="754" r="2" fill="#6a9ae0"/><circle cx="7" cy="752" r="2.500" fill="#6a9ae0"/><path d="M-6 740v12M-6 740l12 11M-4 740h10" stroke="#6a9ae0" stroke-width="1.200" fill="none"/>
<path d="M6 772a8 8 0 1 0 1 12" fill="none" stroke="#6a9ae0" stroke-width="1.600"/><circle cy="778" r="3.500" fill="#6a9ae0"/><circle cx="7" cy="771" r="2" fill="#6a9ae0"/>
<path d="M-8 812q0-4 4-7l9-5q4-1 4 3l-1 6q-3 6-8 9q-8 2-8-6z" fill="none" stroke="#6a9ae0" stroke-width="1.700"/><circle cx="-1" cy="811" r="3" fill="none" stroke="#6a9ae0" stroke-width="1.500"/>
<path d="M-7 838h14l-7 14z" fill="none" stroke="#23a37a" stroke-width="2"/><circle cx="-7" cy="838" r="2" fill="#1d1d1d" stroke="#23a37a"/><circle cx="7" cy="838" r="2" fill="#1d1d1d" stroke="#23a37a"/><circle cy="852" r="2" fill="#1d1d1d" stroke="#23a37a"/>
</g>
<path d="M1570 867q0-5 5-5h26v31h-26q-5 0-5-5z" fill="#303030"/>
<circle cx="1585" cy="878" r="8.500" fill="#e0676f"/><path d="M1585 871a7 7 0 0 1 7 7h-7zM1585 878h-7a7 7 0 0 0 7 7z" fill="#2a2a2a"/>

<!-- breadcrumb -->
<rect x="1617" y="411" width="12" height="12" rx="1" fill="#e6e6e6"/><path d="M1614 412v-4h4M1628 408h4v4M1632 422v4h-4M1618 426h-4v-4" fill="none" stroke="#aaa" stroke-width="1.200"/>
<text x="1641" y="421">kidn...</text>
<path class="chev" d="M1690 411l6 6l-6 6"/>
<path d="M1711 410h15l-7.500 16z" fill="none" stroke="#d8d8d8" stroke-width="1.500"/><circle cx="1711" cy="410" r="2" fill="#303030" stroke="#d8d8d8"/><circle cx="1726" cy="410" r="2" fill="#303030" stroke="#d8d8d8"/><circle cx="1718.500" cy="425" r="2" fill="#303030" stroke="#d8d8d8"/>
<text x="1736" y="421">kidn...</text>
<path class="chev" d="M1785 411l6 6l-6 6"/>
<circle cx="1812" cy="417" r="8.500" fill="#eee"/><path d="M1812 410a7 7 0 0 1 7 7h-7zM1812 417h-7a7 7 0 0 0 7 7z" fill="#2a2a2a"/>
<text x="1831" y="421">kidn...</text>
<path d="M1891 425l5-6M1893 414l8 8M1895 413l8-6l4 4l-6 8" fill="none" stroke="#777" stroke-width="1.300"/>

<!-- material list -->
<rect x="1611" y="448" width="266" height="92" rx="5" fill="#282828"/>
<rect x="1616" y="453" width="256" height="22" rx="3" fill="#4772b3"/>
<circle cx="1633" cy="464" r="7" fill="url(#mat)"/>
<text x="1651" y="468" textLength="118" style="fill:#eef2f8">kidney-dish-basin</text>
<path d="M1623 526v6l7-3z" fill="#b8b8b8"/>
<path d="M1748 526h1m3 0h1m3 0h1m3 0h1M1748 531h1m3 0h1m3 0h1m3 0h1" stroke="#aaa" stroke-width="1.300"/>
<rect x="1888" y="448" width="22" height="46" rx="4" fill="#545454"/><path d="M1888 471h22" stroke="#444"/>
<path d="M1893 459h11M1898.500 453.500v11M1893 483h11" stroke="#c8c8c8" stroke-width="1.700"/>
<rect x="1888" y="503" width="22" height="22" rx="4" fill="#282828"/><path class="chev" d="M1894 512l5 4l5-4"/>

<!-- material row -->
<rect x="1611" y="546" width="37" height="23" rx="4" fill="#282828"/>
<rect x="1648" y="546" width="143" height="23" fill="#1d1d1d"/>
<path d="M1791 546h65q4 0 4 4v15q0 4-4 4h-65z" fill="#545454"/>
<path d="M1815 546v23M1839 546v23" stroke="#444"/>
<circle cx="1624" cy="558" r="8.500" fill="#eee"/><path d="M1624 551a7 7 0 0 1 7 7h-7zM1624 558h-7a7 7 0 0 0 7 7z" fill="#2a2a2a"/>
<path class="chev" d="M1636 557l3 3l3-3"/>
<text x="1657" y="562" textLength="117" style="fill:#dcdcdc">kidney-dish-basin</text>
<path d="M1803 551l7 2v6q0 6-7 8q-7-2-7-8v-6z" fill="none" stroke="#a0a0a0" stroke-width="1.300"/>
<path d="M1824 550h7l4 4v9h-11zM1820 554v12h10" fill="none" stroke="#d0d0d0" stroke-width="1.300"/>
<path d="M1846 553l8 9M1854 553l-8 9" stroke="#d0d0d0" stroke-width="1.300"/>
<rect x="1874" y="546" width="36" height="23" rx="4" fill="#282828"/>
<path d="M1880 552h15l-7.500 14z" fill="none" stroke="#d8d8d8" stroke-width="1.500"/><circle cx="1880" cy="552" r="2" fill="#282828" stroke="#d8d8d8"/><circle cx="1895" cy="552" r="2" fill="#282828" stroke="#d8d8d8"/>
<path class="chev" d="M1900 558l3 3l3-3"/>

<!-- panels -->
<rect x="1610" y="582" width="299" height="29" rx="5" fill="#3d3d3d"/>
<path d="M1610 1014V618q0-5 5-5h289q5 0 5 5v396z" fill="#3d3d3d"/>
<path class="chev" d="M1622 592l4 5l-4 5"/>
<text x="1636" y="601">Preview</text>
<path d="M1884 594h1m3 0h1m3 0h1m3 0h1M1884 600h1m3 0h1m3 0h1m3 0h1" stroke="#666" stroke-width="1.300"/>
<path class="chev" d="M1621 625l5 5l5-5"/>
<text x="1636" y="633">Surface</text>
<path d="M1884 626h1m3 0h1m3 0h1m3 0h1M1884 632h1m3 0h1m3 0h1m3 0h1" stroke="#666" stroke-width="1.300"/>

<text class="lab" x="1716" y="668">Surface</text>
<rect x="1728" y="653" width="147" height="22" rx="4" fill="#282828"/><circle cx="1739" cy="664" r="4.500" fill="#5ec95e"/>
<text x="1753" y="668">Principled BSDF</text>

<rect x="1728" y="693" width="147" height="23" rx="4" fill="#2c3e58"/><circle cx="1739" cy="704.500" r="4.500" fill="#cfcf22"/>
<text x="1753" y="709">Base Color</text>
<path class="chev" d="M1628 699l5 6l-5 6"/><circle cx="1655" cy="705" r="2.500" fill="#e0e0e0"/><text class="lab" x="1716" y="709">Base ...</text>

<rect x="1728" y="723" width="147" height="22" rx="4" fill="#282828"/><circle cx="1739" cy="734" r="4.500" fill="#a1a1a1"/>
<text x="1753" y="738">Metallic</text>
<path class="chev" d="M1628 728l5 6l-5 6"/><circle cx="1655" cy="734" r="2.500" fill="#e0e0e0"/><text class="lab" x="1716" y="738">Metallic</text>

<rect x="1728" y="752" width="147" height="22" rx="4" fill="#282828"/><circle cx="1739" cy="763" r="4.500" fill="#a1a1a1"/>
<text x="1753" y="767">Roughness</text>
<path class="chev" d="M1628 757l5 6l-5 6"/><circle cx="1655" cy="763" r="2.500" fill="#e0e0e0"/><text class="lab" x="1716" y="767">Roug...</text>

<rect x="1728" y="781" width="147" height="22" rx="4" fill="#545454"/><path d="M1750 781h-18q-4 0-4 4v14q0 4 4 4h18z" fill="#282828"/><circle cx="1739" cy="792" r="4.500" fill="#a1a1a1"/>
<text x="1812" y="796" text-anchor="middle" style="fill:#e4e4e4">1.450</text><text class="lab" x="1716" y="796">IOR</text><circle cx="1888" cy="792" r="2.500" fill="#e0e0e0"/>

<rect x="1728" y="810" width="147" height="22" rx="4" fill="#4772b3"/><path d="M1750 810h-18q-4 0-4 4v14q0 4 4 4h18z" fill="#282828"/><circle cx="1739" cy="821" r="4.500" fill="#a1a1a1"/>
<text x="1812" y="825" text-anchor="middle" style="fill:#f0f0f0">1.000</text><text class="lab" x="1716" y="825">Alpha</text><circle cx="1888" cy="821" r="2.500" fill="#e0e0e0"/>

<rect x="1728" y="839" width="147" height="22" rx="4" fill="#282828"/><circle cx="1739" cy="850" r="4.500" fill="#6363c7"/>
<text x="1753" y="854">Normal Map</text>
<path class="chev" d="M1628 844l5 6l-5 6"/><circle cx="1655" cy="850" r="2.500" fill="#e0e0e0"/><text class="lab" x="1716" y="854">Normal</text>

<path class="chev" d="M1628 873l5 6l-5 6"/><text x="1644" y="883">Diffuse</text>
<path class="chev" d="M1628 901l5 6l-5 6"/><text x="1644" y="911">Subsurface</text>
<path class="chev" d="M1628 929l5 6l-5 6"/><text x="1644" y="939">Specular</text>
<path class="chev" d="M1628 957l5 6l-5 6"/><text x="1644" y="967">Transmission</text>
<path class="chev" d="M1628 985l5 6l-5 6"/><text x="1644" y="995">Coat</text>
<path d="M1628 1012l2 2M1644 1012h14" stroke="#aaa" stroke-width="1.200"/>
<rect x="1913" y="400" width="2" height="385" rx="1" fill="#4a4a4a"/>

<!-- status bar -->
<rect x="0" y="1014" width="1920" height="24" fill="#181818"/>
<g fill="none" stroke="#999" stroke-width="1.200">
<rect x="12" y="1018" width="13" height="18" rx="5"/><rect x="81" y="1018" width="13" height="18" rx="5"/><rect x="183" y="1018" width="13" height="18" rx="5"/></g>
<path d="M13 1023v-4h5v7h-5z" fill="#999"/><path d="M85 1019h5v8h-5z" fill="#999"/><path d="M190 1019h5v8h-5z" fill="#999"/>
<text class="sb" x="28" y="1031">Select</text><text class="sb" x="97" y="1031">Rotate View</text><text class="sb" x="199" y="1031">Options</text>
<text class="sb" x="999" y="1031" textLength="831">Collection | kidney-dish-basin | Verts:2,784 | Faces:2,782 | Tris:5,564 | Objects:0/1 | Memory: 302.9 MiB | VRAM: 1.5/12.0 GiB |</text>
<circle cx="1845" cy="1027" r="8" fill="none" stroke="#999" stroke-width="1.100"/><path d="M1837 1027h16M1845 1019q-6 8 0 16M1845 1019q6 8 0 16" fill="none" stroke="#999" stroke-width="1"/>
<text class="sb" x="1853" y="1036" style="font-size:8px;letter-spacing:0">3</text>
<text class="sb" x="1862" y="1031">|</text><text class="sb" x="1870" y="1031" textLength="34">4.5.0</text>
</svg>
</body></html>
